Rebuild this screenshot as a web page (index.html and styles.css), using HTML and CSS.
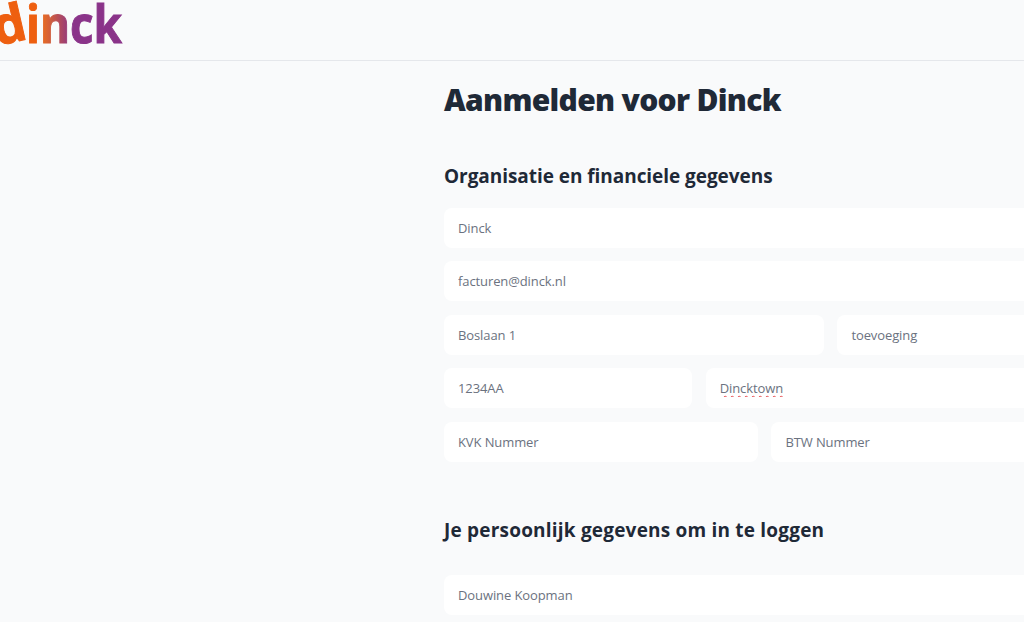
FILE: index.html
```html
<!DOCTYPE html>
<html lang="nl">
  <head>
    <meta charset="UTF-8" />
    <meta name="viewport" content="width=device-width, initial-scale=1.0" />
    <title>Aanmelden voor Dinck</title>
    <link rel="stylesheet" href="styles.css">
  </head>
  <body>
    <header class="topbar">
      <svg class="logo" width="124" height="60" viewBox="0 0 124 60" role="img" aria-label="dinck">
        <defs>
          <linearGradient id="logoGradient" gradientUnits="userSpaceOnUse" x1="38" y1="0" x2="72" y2="0">
            <stop offset="0" stop-color="#ee5f10" />
            <stop offset="0.2" stop-color="#e2692a" />
            <stop offset="1" stop-color="#8a3389" />
          </linearGradient>
        </defs>
        <text class="logo-text logo-d" x="-3" y="46" rotate="-13">d</text>
        <text class="logo-text" x="26" y="43" textLength="96" lengthAdjust="spacingAndGlyphs" fill="url(#logoGradient)" stroke="url(#logoGradient)">inck</text>
      </svg>
    </header>

    <main class="content">
      <h1>Aanmelden voor Dinck</h1>

      <form class="signup">
        <h2>Organisatie en financiele gegevens</h2>
        <div class="fields">
          <input type="text" value="Dinck" />
          <input type="email" value="facturen@dinck.nl" />
          <div class="row">
            <input class="w-street" type="text" value="Boslaan 1" />
            <input type="text" placeholder="toevoeging" />
          </div>
          <div class="row">
            <input class="w-zip" type="text" value="1234AA" />
            <input class="misspelled" type="text" value="Dincktown" />
          </div>
          <div class="row">
            <input class="w-half" type="text" placeholder="KVK Nummer" />
            <input class="w-half" type="text" placeholder="BTW Nummer" />
          </div>
        </div>

        <h2 class="second">Je persoonlijk gegevens om in te loggen</h2>
        <div class="fields">
          <input type="text" value="Douwine Koopman" />
        </div>
      </form>
    </main>
  </body>
</html>
```

FILE: styles.css
```css
* {
  margin: 0;
  padding: 0;
  box-sizing: border-box;
  font-family: "Open Sans", "Noto Sans", sans-serif;
}

html,
body {
  height: 100%;
  overflow: hidden;
}

body {
  background: #f9fafb;
  color: #1f2937;
}

.topbar {
  height: 61px;
  border-bottom: 1px solid #e5e7eb;
  overflow: hidden;
}

.logo {
  display: block;
}

.logo-text {
  font-size: 52px;
  font-weight: 700;
  stroke-width: 1px;
}

.logo-d {
  fill: #ee5f10;
  stroke: #ee5f10;
}

.content {
  width: 641px;
  margin-left: 444px;
}

h1 {
  font-size: 30px;
  font-weight: 800;
  line-height: 40px;
  letter-spacing: -0.7px;
  margin-top: 19px;
}

h2 {
  font-size: 19px;
  font-weight: 700;
  line-height: 27px;
  letter-spacing: -0.05px;
  margin-top: 43px;
  margin-bottom: 18px;
}

h2.second {
  letter-spacing: 0.2px;
  margin-top: 55px;
  margin-bottom: 31.4px;
}

.fields {
  display: flex;
  flex-direction: column;
  gap: 13.4px;
}

.row {
  display: flex;
  gap: 13.4px;
}

input {
  display: block;
  width: 100%;
  min-width: 0;
  height: 40px;
  padding: 0 14px;
  border: none;
  border-radius: 8px;
  background: white;
  color: #6b7280;
  font-size: 13px;
  line-height: 22px;
  letter-spacing: -0.1px;
}

input::placeholder {
  color: #6b7280;
  opacity: 1;
}

.row input {
  flex: 1;
}

.row .w-street {
  flex: 0 0 380px;
}

.row .w-zip {
  flex: 0 0 248.3px;
}

.row .w-half {
  flex: 0 0 314px;
}

.misspelled {
  text-decoration: underline wavy #e5484d 1px;
  text-underline-offset: 2px;
}
```
